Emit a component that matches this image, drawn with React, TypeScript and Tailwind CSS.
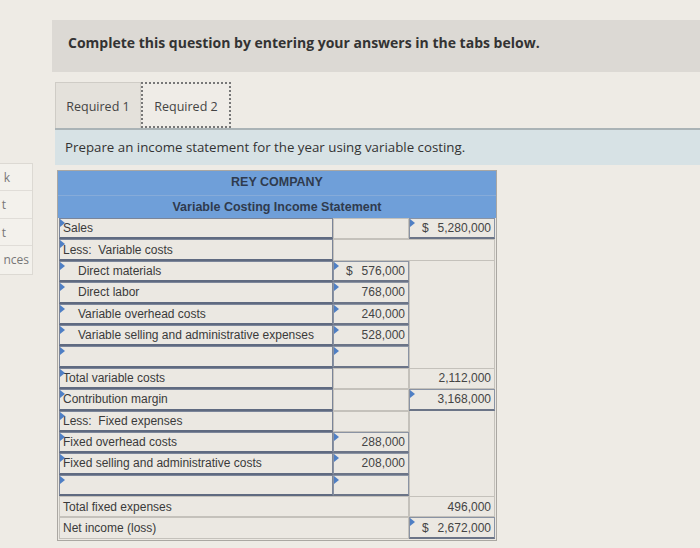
type Cell = { text?: string; dollar?: boolean; kind: "input" | "plain" | "blank" };

type Row = {
  label: string;
  indent?: boolean;
  labelInput: boolean;
  mid: Cell;
  right: Cell;
  span?: "midright" | "labelmid";
};

const rows: Row[] = [
  { label: "Sales", labelInput: true, mid: { kind: "plain" }, right: { kind: "input", text: "5,280,000", dollar: true } },
  { label: "Less:  Variable costs", labelInput: true, mid: { kind: "plain" }, right: { kind: "plain" }, span: "midright" },
  { label: "Direct materials", indent: true, labelInput: true, mid: { kind: "input", text: "576,000", dollar: true }, right: { kind: "blank" } },
  { label: "Direct labor", indent: true, labelInput: true, mid: { kind: "input", text: "768,000" }, right: { kind: "blank" } },
  { label: "Variable overhead costs", indent: true, labelInput: true, mid: { kind: "input", text: "240,000" }, right: { kind: "blank" } },
  { label: "Variable selling and administrative expenses", indent: true, labelInput: true, mid: { kind: "input", text: "528,000" }, right: { kind: "blank" } },
  { label: "", labelInput: true, mid: { kind: "input" }, right: { kind: "blank" } },
  { label: "Total variable costs", labelInput: true, mid: { kind: "plain" }, right: { kind: "plain", text: "2,112,000" } },
  { label: "Contribution margin", labelInput: true, mid: { kind: "plain" }, right: { kind: "input", text: "3,168,000" } },
  { label: "Less:  Fixed expenses", labelInput: true, mid: { kind: "plain" }, right: { kind: "blank" } },
  { label: "Fixed overhead costs", labelInput: true, mid: { kind: "input", text: "288,000" }, right: { kind: "blank" } },
  { label: "Fixed selling and administrative costs", labelInput: true, mid: { kind: "input", text: "208,000" }, right: { kind: "blank" } },
  { label: "", labelInput: true, mid: { kind: "input" }, right: { kind: "blank" } },
  { label: "Total fixed expenses", labelInput: false, mid: { kind: "blank" }, right: { kind: "plain", text: "496,000" }, span: "labelmid" },
  { label: "Net income (loss)", labelInput: false, mid: { kind: "blank" }, right: { kind: "input", text: "2,672,000", dollar: true }, span: "labelmid" },
];

function Flag() {
  return (
    <span className="absolute left-0 top-0 h-0 w-0 border-t-[4px] border-b-[4px] border-l-[5px] border-t-transparent border-b-transparent border-l-[#4f7fc4]" />
  );
}

function ValueCell({ cell }: { cell: Cell }) {
  const base = "relative flex h-full items-center justify-end gap-[9px] pr-[3px] text-[12px] text-[#444]";
  const cls =
    cell.kind === "input"
      ? "border border-[#8a93a3] border-b-2 border-b-[#6b7487] bg-[#ebe8e2]"
      : cell.kind === "plain"
        ? "border border-[#c4c1bb] bg-[#ebe8e2]"
        : "border-x border-[#c4c1bb] bg-[#ebe8e2]";
  return (
    <div className={`${base} ${cls}`}>
      {cell.kind === "input" && <Flag />}
      {cell.dollar && <span>$</span>}
      <span>{cell.text ?? ""}</span>
    </div>
  );
}

function LabelCell({ r }: { r: Row }) {
  return (
    <div
      className={`relative flex h-full items-center whitespace-pre text-[12px] text-[#3a3a3a] ${
        r.labelInput
          ? "border border-[#7b8599] border-b-2 border-b-[#5f6a80] bg-[#ebe8e2]"
          : "col-span-2 border border-[#c4c1bb] bg-[#ebe8e2]"
      } ${r.indent ? "pl-[18px]" : "pl-[3px]"}`}
    >
      {r.labelInput && <Flag />}
      {r.label}
    </div>
  );
}

function IncomeTable() {
  return (
    <div className="w-[440px] border border-[#aaa7a2] bg-[#ebe8e2]" style={{ fontFamily: '"Liberation Sans", Arial, sans-serif' }}>
      <div className="flex h-[25px] items-end justify-center border-b border-[#86abd9] bg-[#6f9fd9] pb-[3px] text-[12.5px] font-bold text-[#2f3b4e]">
        REY COMPANY
      </div>
      <div className="flex h-[22px] items-center justify-center bg-[#6f9fd9] text-[12.5px] font-bold text-[#2f3b4e]">
        Variable Costing Income Statement
      </div>
      <div className="px-[1px] pb-[1px]">
        {rows.map((r, i) => (
          <div key={i} className="grid h-[21.4px] grid-cols-[274px_76px_1fr]">
            <LabelCell r={r} />
            {r.span === "midright" ? (
              <div className="col-span-2 border border-[#c4c1bb] bg-[#ebe8e2]" />
            ) : r.span === "labelmid" ? (
              <ValueCell cell={r.right} />
            ) : (
              <>
                <ValueCell cell={r.mid} />
                <ValueCell cell={r.right} />
              </>
            )}
          </div>
        ))}
      </div>
    </div>
  );
}

export default function App() {
  return (
    <div className="flex h-[548px] w-[700px] overflow-hidden bg-[#eeebe5]" style={{ fontFamily: '"Open Sans", "DejaVu Sans", sans-serif' }}>
      <div className="mt-[163px] w-[33px] shrink-0 self-start border-y border-r border-[#dcd9d3] bg-[#f3f1ec] text-right text-[12px] text-[#777]">
        <div className="h-[27px] border-b border-[#e0ddd8] pr-[22px] leading-[27px]">k</div>
        <div className="h-[28px] border-b border-[#e0ddd8] pr-[26px] leading-[28px]">t</div>
        <div className="h-[27px] border-b border-[#e0ddd8] pr-[26px] leading-[27px]">t</div>
        <div className="h-[28px] pr-[3px] leading-[28px]">nces</div>
      </div>

      <div className="ml-[19px] flex min-w-0 flex-1 flex-col pt-[20px]">
        <div className="h-[52px] bg-[#dcd9d4] pl-[16px] pt-[12px] text-[14px] font-bold text-[#333]">
          Complete this question by entering your answers in the tabs below.
        </div>

        <div className="ml-[3px] mt-[10px] flex h-[46px] items-stretch">
          <div className="flex w-[86px] items-center justify-center border border-b-0 border-[#cfccc6] bg-[#e4e1db] pt-[4px] text-[12.5px] text-[#444]">
            Required 1
          </div>
          <div className="flex w-[90px] items-center justify-center border-2 border-dotted border-[#777] bg-[#efece7] pt-[4px] text-[12.5px] text-[#444]">
            Required 2
          </div>
        </div>

        <div className="ml-[3px] flex h-[37px] items-center border-t-2 border-[#aab3b6] bg-[#d7e2e5] pl-[10px] text-[13.3px] text-[#333]">
          Prepare an income statement for the year using variable costing.
        </div>

        <div className="ml-[5px] mt-[5px]">
          <IncomeTable />
        </div>
      </div>
    </div>
  );
}
